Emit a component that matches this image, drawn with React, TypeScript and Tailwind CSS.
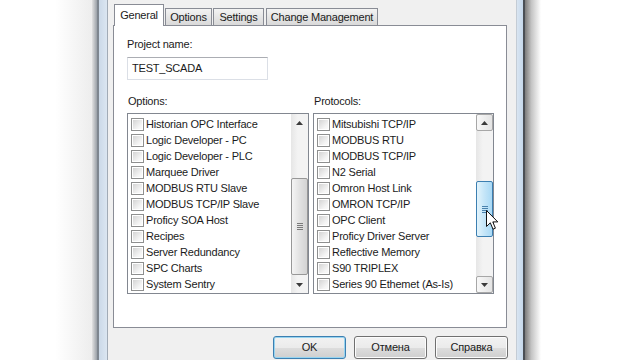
import type { ReactNode } from 'react'

const options = [
  'Historian OPC Interface',
  'Logic Developer - PC',
  'Logic Developer - PLC',
  'Marquee Driver',
  'MODBUS RTU Slave',
  'MODBUS TCP/IP Slave',
  'Proficy SOA Host',
  'Recipes',
  'Server Redundancy',
  'SPC Charts',
  'System Sentry',
]

const protocols = [
  'Mitsubishi TCP/IP',
  'MODBUS RTU',
  'MODBUS TCP/IP',
  'N2 Serial',
  'Omron Host Link',
  'OMRON TCP/IP',
  'OPC Client',
  'Proficy Driver Server',
  'Reflective Memory',
  'S90 TRIPLEX',
  'Series 90 Ethemet (As-Is)',
]

// Win7 style unchecked box
function Checkbox() {
  return (
    <span className="box-border flex h-[13px] w-[13px] shrink-0 items-center justify-center border border-[#8e8f8f] bg-white">
      <span className="h-[9px] w-[9px] bg-[linear-gradient(135deg,#d4d4d4,#f4f4f4_70%,#fbfbfb)]" />
    </span>
  )
}

function Arrow({ up }: { up?: boolean }) {
  return (
    <svg width="7" height="4" viewBox="0 0 7 4">
      {up ? <path d="M0 4 L3.5 0 L7 4 Z" fill="#3b3b3b" /> : <path d="M0 0 L3.5 4 L7 0 Z" fill="#3b3b3b" />}
    </svg>
  )
}

function Grip({ hot }: { hot?: boolean }) {
  const c = hot ? 'bg-[#4a82ad]' : 'bg-[#7a7a7a]'
  return (
    <div className="flex flex-col gap-[1px]">
      <span className={`h-[1px] w-[6px] ${c}`} />
      <span className={`h-[1px] w-[6px] ${c}`} />
      <span className={`h-[1px] w-[6px] ${c}`} />
      <span className={`h-[1px] w-[6px] ${c}`} />
    </div>
  )
}

function Scrollbar({ top, height, hot }: { top: number; height: number; hot?: boolean }) {
  const btn = hot
    ? 'border border-[#a7a7a7] rounded-[2px] bg-[linear-gradient(90deg,#f8f8f8,#e4e4e4)]'
    : ''
  return (
    <div className="flex w-[17px] shrink-0 flex-col bg-[linear-gradient(90deg,#e6e6e6,#f3f3f3_40%,#f3f3f3)]">
      <div className={`box-border flex h-[17px] items-center justify-center ${btn}`}>
        <Arrow up />
      </div>
      <div className="flex-1" style={{ paddingTop: top }}>
        <div
          className={
            hot
              ? 'box-border flex items-center justify-center rounded-[2px] border border-[#3c7fb1] bg-[linear-gradient(90deg,#e3f4fc,#c4e5f8_50%,#a9d9f5)]'
              : 'box-border flex items-center justify-center rounded-[2px] border border-[#979797] bg-[linear-gradient(90deg,#f4f4f4,#e2e2e2_50%,#d3d3d3)]'
          }
          style={{ height }}
        >
          <Grip hot={hot} />
        </div>
      </div>
      <div className={`box-border flex h-[17px] items-center justify-center ${btn}`}>
        <Arrow />
      </div>
    </div>
  )
}

function ListBox({ items, thumbTop, thumbHeight, hot }: { items: string[]; thumbTop: number; thumbHeight: number; hot?: boolean }) {
  return (
    <div className="flex h-[181px] border border-[#828790] bg-white">
      <div className="min-w-0 flex-1 overflow-hidden pl-[3px] pt-[2px]">
        {items.map((t) => (
          <div key={t} className="flex h-4 items-center">
            <Checkbox />
            <span className="ml-[2px] whitespace-nowrap">{t}</span>
          </div>
        ))}
      </div>
      <Scrollbar top={thumbTop} height={thumbHeight} hot={hot} />
    </div>
  )
}

function Tab({ children, active, className = '' }: { children: ReactNode; active?: boolean; className?: string }) {
  return (
    <div
      className={
        active
          ? `relative z-10 -mb-[1px] box-border flex h-[22px] items-start justify-center border border-b-0 border-[#898c95] bg-white pt-[4px] ${className}`
          : `box-border flex h-[17px] items-center justify-center border border-b-0 border-[#898c95] bg-[linear-gradient(180deg,#f3f3f3,#e6e6e6_50%,#d9d9d9)] ${className}`
      }
    >
      {children}
    </div>
  )
}

function Button({ children, focused }: { children: ReactNode; focused?: boolean }) {
  return (
    <div
      className={
        focused
          ? 'box-border flex h-[23px] w-[73px] items-center justify-center rounded-[3px] border border-[#3c7fb1] bg-[linear-gradient(180deg,#f2f2f2,#ebebeb_50%,#dddddd_51%,#cfcfcf)] shadow-[inset_0_0_0_1px_#97d4f0]'
          : 'box-border flex h-[23px] w-[73px] items-center justify-center rounded-[3px] border border-[#707070] bg-[linear-gradient(180deg,#f2f2f2,#ebebeb_50%,#dddddd_51%,#cfcfcf)] shadow-[inset_0_0_0_1px_#fcfcfc]'
      }
    >
      {children}
    </div>
  )
}

export default function App() {
  return (
    <div className="relative flex h-[360px] w-[640px] overflow-hidden bg-white font-['Liberation_Sans',Arial,sans-serif] text-[11px] leading-[13px] tracking-[-0.2px] text-[#1b1b1b]">
      <div className="w-[92px] shrink-0 bg-[linear-gradient(90deg,#ffffff_60%,#ededed)]" />
      {/* left frame */}
      <div className="box-border flex w-[16px] shrink-0">
        <div className="w-[5px] bg-[linear-gradient(90deg,#e2e2e2,#9aa0a7)]" />
        <div className="w-[2px] bg-[#7e868f]" />
        <div className="w-[8px] bg-[linear-gradient(90deg,#cbd9e8,#dbe6f1)]" />
        <div className="w-[1px] bg-[#a1abb6]" />
      </div>
      {/* dialog body */}
      <div className="flex w-[408px] shrink-0 flex-col bg-[#f0f0f0] pl-[5px] pr-[9px]">
        <div className="flex h-[25px] items-end pl-[1px]">
          <Tab active className="w-[50px]">General</Tab>
          <Tab className="ml-[1px] w-[47px]">Options</Tab>
          <Tab className="ml-[1px] w-[51px]">Settings</Tab>
          <Tab className="ml-[2px] w-[112px]">Change Management</Tab>
        </div>
        <div className="box-border flex h-[303px] flex-col border border-[#898c95] bg-white pl-[13px] pr-[12px] pt-[12px]">
          <div>Project name:</div>
          <div className="mt-[6px] box-border flex h-[23px] w-[141px] items-center border border-[#dbdfe6] border-t-[#abadb3] pl-[4px]">
            TEST_SCADA
          </div>
          <div className="mt-[15px] flex gap-[4px]">
            <div className="w-[182px]">
              <div className="pl-[1px]">Options:</div>
              <div className="mt-[5px]">
                <ListBox items={options} thumbTop={47} thumbHeight={97} />
              </div>
            </div>
            <div className="w-[181px]">
              <div className="pl-[1px]">Protocols:</div>
              <div className="mt-[5px]">
                <ListBox items={protocols} thumbTop={50} thumbHeight={56} hot />
              </div>
            </div>
          </div>
        </div>
        <div className="-mr-[1px] mt-[8px] flex justify-end gap-[8px] text-[11px]">
          <Button focused>OK</Button>
          <Button>Отмена</Button>
          <Button>Справка</Button>
        </div>
      </div>
      {/* right frame */}
      <div className="flex w-[9px] shrink-0">
        <div className="w-[1px] bg-[#c4ccd5]" />
        <div className="w-[6px] bg-[linear-gradient(90deg,#d9e5f1,#c5d8ec)]" />
        <div className="w-[2px] bg-[#4a4f55]" />
      </div>
      <div className="w-[16px] shrink-0 bg-[linear-gradient(90deg,#7c7c7c,#c4c4c4_40%,#ffffff)]" />
      <div className="flex-1 bg-white" />

      {/* mouse cursor over the protocols scrollbar */}
      <svg className="absolute left-[486px] top-[210px]" width="13" height="21" viewBox="0 0 13 21">
        <path d="M0.5 0.5 L0.5 16.5 L4.3 12.8 L7 19.2 L9.4 18.2 L6.8 11.9 L11.8 11.9 Z" fill="#ffffff" stroke="#111111" strokeLinejoin="round" />
      </svg>
    </div>
  )
}
